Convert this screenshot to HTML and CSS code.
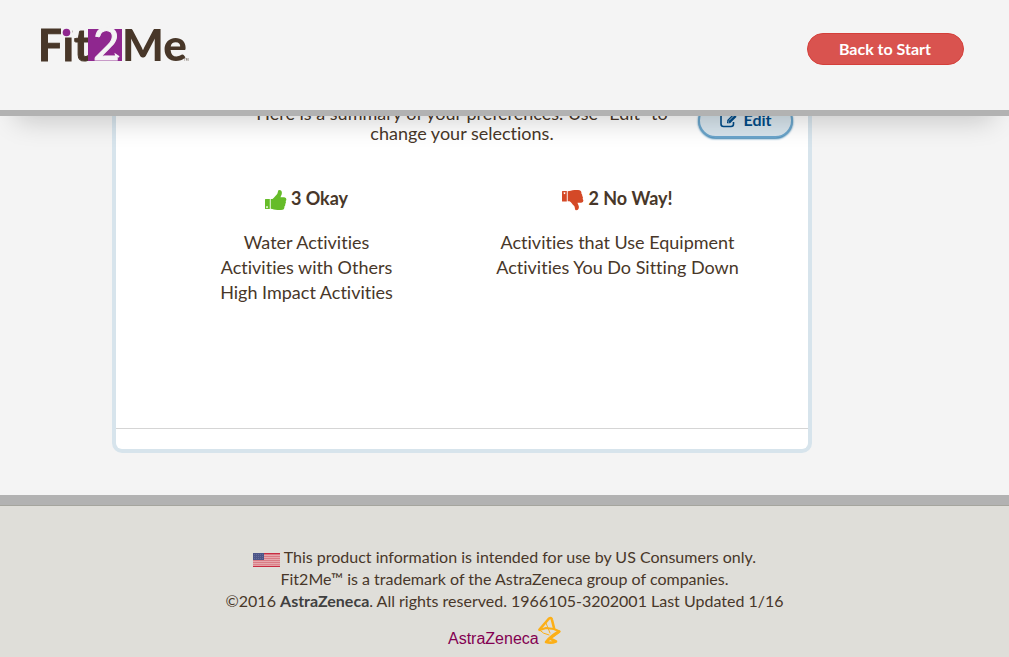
FILE: index.html
```html
<!DOCTYPE html>
<html lang="en">
<head>
<meta charset="utf-8">
<title>Fit2Me</title>
<link rel="stylesheet" href="styles.css">
</head>
<body>
<header class="site-header">
  <a class="brand" href="#" aria-label="Fit2Me home">
    <svg class="brand-logo" width="150" height="40" viewBox="0 0 150 40">
      <text class="logo-word logo-fit" x="-3" y="36">Fit</text>
      <rect class="logo-ground" x="20" y="0" width="11" height="12"/>
      <circle class="logo-purple" cx="25.500" cy="7.500" r="3.800"/>
      <rect class="logo-purple" x="47" y="4" width="34" height="32"/>
      <text class="logo-two" x="52" y="35">2</text>
      <path class="logo-swash" d="M71 33.500Q76 34 75 30L78 32"/>
      <text class="logo-word" x="81" y="36">Me</text>
      <text class="logo-tm" x="143" y="36">TM</text>
    </svg>
  </a>
  <button class="start-button" type="button">Back to Start</button>
</header>

<main class="page">
  <section class="panel">
    <div class="summary">
      <p class="intro">Here is a summary of your preferences. Use “Edit” to change your selections.</p>
      <button class="edit-button" type="button">
        <svg width="20" height="16" viewBox="0 0 20 16">
          <path d="M12 2H4.500Q2 2 2 4.500V12Q2 14.500 4.500 14.500H12Q14.500 14.500 14.500 12V10" fill="none" stroke="currentColor" stroke-width="1.600"/>
          <path d="M8 8.200L14.500 1.700L17.600 4.800L11.100 11.300H8Z" fill="currentColor"/>
          <path d="M15.300 .9L16.200 0L19.300 3.100L18.400 4Z" fill="currentColor"/>
          <path d="M10 8.500L14.500 4M8.600 9.200L10.200 10.700" stroke="#d3e0e8" stroke-width=".8"/>
        </svg>
        Edit
      </button>
    </div>
    <div class="choices">
      <section class="choice">
        <h2 class="choice-title">
          <svg class="thumb okay" width="22" height="22" viewBox="0 0 22 22">
            <path d="M0 10.500Q0 10 .6 10H4.800V20H.6Q0 20 0 19.400ZM2 17.200a.9.900 0 1 0 .01 0Z" fill-rule="evenodd"/>
            <path d="M5.700 10H7.500C9 9 10.500 6.500 12 5.200C13.200 4 12.700 1 14 1C16.400 1 17.200 2.700 16.800 4.700C16.600 6 15.800 7 15.500 8.300H19.200Q21.500 8.500 21.400 10.500Q21.200 11.600 20.700 12.100Q21.400 13.700 20.300 15Q20.500 16.500 19.400 17.500Q19.800 21 16 21H12.500C9.500 21 8 19.700 5.700 19.700Z"/>
          </svg>
          3 Okay
        </h2>
        <ul class="choice-list">
          <li>Water Activities</li>
          <li>Activities with Others</li>
          <li>High Impact Activities</li>
        </ul>
      </section>
      <section class="choice">
        <h2 class="choice-title">
          <svg class="thumb no-way" width="22" height="22" viewBox="0 0 22 22">
            <path d="M0 2.600Q0 2 .6 2H4.800V12.600H.6Q0 12.600 0 12ZM2.500 3.200a.9.900 0 1 0 .01 0Z" fill-rule="evenodd"/>
            <path d="M5.700 2.300C8 2.300 9.500 1 12.500 1H16Q19.800 1 19.400 4.500Q20.500 5.500 20.300 7Q21.400 8.300 20.700 9.900Q21.200 10.400 21.400 11.500Q21.500 13.500 19.200 13.700H15.500C15.800 15 16.600 16 16.800 17.300C17.200 19.300 16.400 21.300 14 21.300C12.700 21.300 13.200 18 12 16.800C10.500 15.500 9 13 7.500 12.200H5.700Z"/>
          </svg>
          2 No Way!
        </h2>
        <ul class="choice-list">
          <li>Activities that Use Equipment</li>
          <li>Activities You Do Sitting Down</li>
        </ul>
      </section>
    </div>
    <div class="panel-foot"></div>
  </section>
</main>

<footer class="site-footer">
  <p class="legal">
    <svg class="flag" width="27" height="14" viewBox="0 0 27 14">
      <rect width="27" height="14" fill="#d97b84"/>
      <path d="M0 .5H27M0 13.500H27" stroke="#c92b42"/>
      <path d="M0 2.500H27M0 4.500H27M0 6.500H27M0 8.500H27M0 10.500H27M0 12.300H27" stroke="#e9b5b9" stroke-width=".8"/>
      <rect width="11" height="7" fill="#4c5589"/>
      <path d="M1 1.500H11M1 3.500H11M1 5.500H11" stroke="#777da5" stroke-width=".6" stroke-dasharray="1 1"/>
    </svg>
    This product information is intended for use by US Consumers only.<br>
    Fit2Me™ is a trademark of the AstraZeneca group of companies.<br>
    ©2016 <strong>AstraZeneca</strong>. All rights reserved. 1966105-3202001 Last Updated 1/16
  </p>
  <a class="company" href="#" aria-label="AstraZeneca">
    <svg width="114" height="30" viewBox="0 0 114 30">
      <text class="company-name" x="0" y="28">AstraZeneca</text>
      <g fill="none" stroke="#fcaf17" stroke-linecap="round" stroke-linejoin="round">
        <path d="M91.500 13.500L101 2.500Q103.500 1 104 4L106 12" stroke-width="2.600"/>
        <path d="M91.500 14L98 12L106 13L111.500 15.500L100 24" stroke-width="2.200"/>
        <path d="M91.500 14Q95 18 101 19M98 7L102 17" stroke-width="1"/>
        <path d="M111 15.500Q103 20 98 26Q103 27.500 108 25.500L103 23" stroke-width="2.600"/>
      </g>
    </svg>
  </a>
</footer>
</body>
</html>
```
FILE: styles.css
```css
* { box-sizing: border-box; }

body {
  margin: 0;
  background: #f4f4f4;
  color: #483729;
  font: 18px/25px Lato, sans-serif;
  font-variant-ligatures: none;
}

h2, p, ul { margin: 0; padding: 0; }
button { font-family: inherit; cursor: pointer; }

.site-header {
  position: fixed;
  inset: 0 0 auto;
  z-index: 10;
  display: flex;
  justify-content: space-between;
  align-items: flex-start;
  height: 116px;
  padding: 25px 45px 0 41px;
  background: #f4f4f4;
  border-bottom: 6px solid #b2b2b2;
  box-shadow: 0 20px 26px -16px rgba(0, 0, 0, .2);
}

.brand-logo { display: block; overflow: visible; }
.logo-word { font: 900 44px Lato, sans-serif; fill: #483729; }
.logo-fit { font-weight: 700; stroke: #483729; }
.logo-two { font: 400 46px Lato, sans-serif; fill: #f4f4f4; stroke: #f4f4f4; }
.logo-tm { font: 3px Lato, sans-serif; fill: #483729; }
.logo-purple { fill: #8f278f; }
.logo-ground { fill: #f4f4f4; }
.logo-swash { fill: none; stroke: #f4f4f4; stroke-width: 2; }

.start-button {
  margin-top: 8px;
  padding: 0 32px 2px 31px;
  height: 32px;
  border: 1px solid #d43f3a;
  border-radius: 16px;
  background: #d9534f;
  color: #fff;
  font-size: 16px;
  font-weight: 700;
}

.page {
  max-width: 785px;
  margin: 0 auto;
  padding: 88px 0 42px;
}

.panel {
  max-width: 700px;
  border: 4px solid #d7e4ec;
  border-top: 0;
  border-radius: 0 0 10px 10px;
  background: #fff;
}

.summary {
  display: flex;
  justify-content: flex-end;
  align-items: flex-start;
  gap: 24px;
  padding: 15px 15px 0;
}

.intro {
  flex: 0 1 424px;
  line-height: 20px;
  text-align: center;
}

.edit-button {
  display: flex;
  align-items: center;
  justify-content: center;
  gap: 4px;
  width: 95px;
  height: 35px;
  padding-bottom: 3px;
  border: 2px solid #6ba5cb;
  border-radius: 18px;
  background: #d7e4ec;
  box-shadow: 0 1px 2px #337fae;
  color: #004b87;
  font-size: 16px;
  font-weight: 700;
}

.choices {
  display: grid;
  grid-template-columns: 1fr 1fr;
  min-height: 286px;
  padding: 43px 35px 0;
  border-bottom: 1px solid #d5d5d5;
  text-align: center;
}

.choice-title {
  display: flex;
  justify-content: center;
  align-items: center;
  gap: 4px;
  margin-bottom: 19px;
  font-size: 18px;
  line-height: 25px;
}

.choice-list { list-style: none; }
.thumb { margin-top: 3px; }
.okay { fill: #66bc29; }
.no-way { fill: #d44927; }
.panel-foot { height: 20px; }

.site-footer {
  min-height: 162px;
  padding: 41px 20px 8px;
  border-top: 10px solid #b2b2b2;
  background: #dfded9;
  box-shadow: inset 0 1px #a5a59e;
  text-align: center;
}

.legal { font-size: 16px; line-height: 22px; }
.legal strong { color: #404040; }
.flag { vertical-align: -4px; }
.company { display: inline-block; margin-top: 4px; }
.company svg { display: block; overflow: visible; }
.company-name { font: 16px "Liberation Sans", sans-serif; fill: #830051; }
```
